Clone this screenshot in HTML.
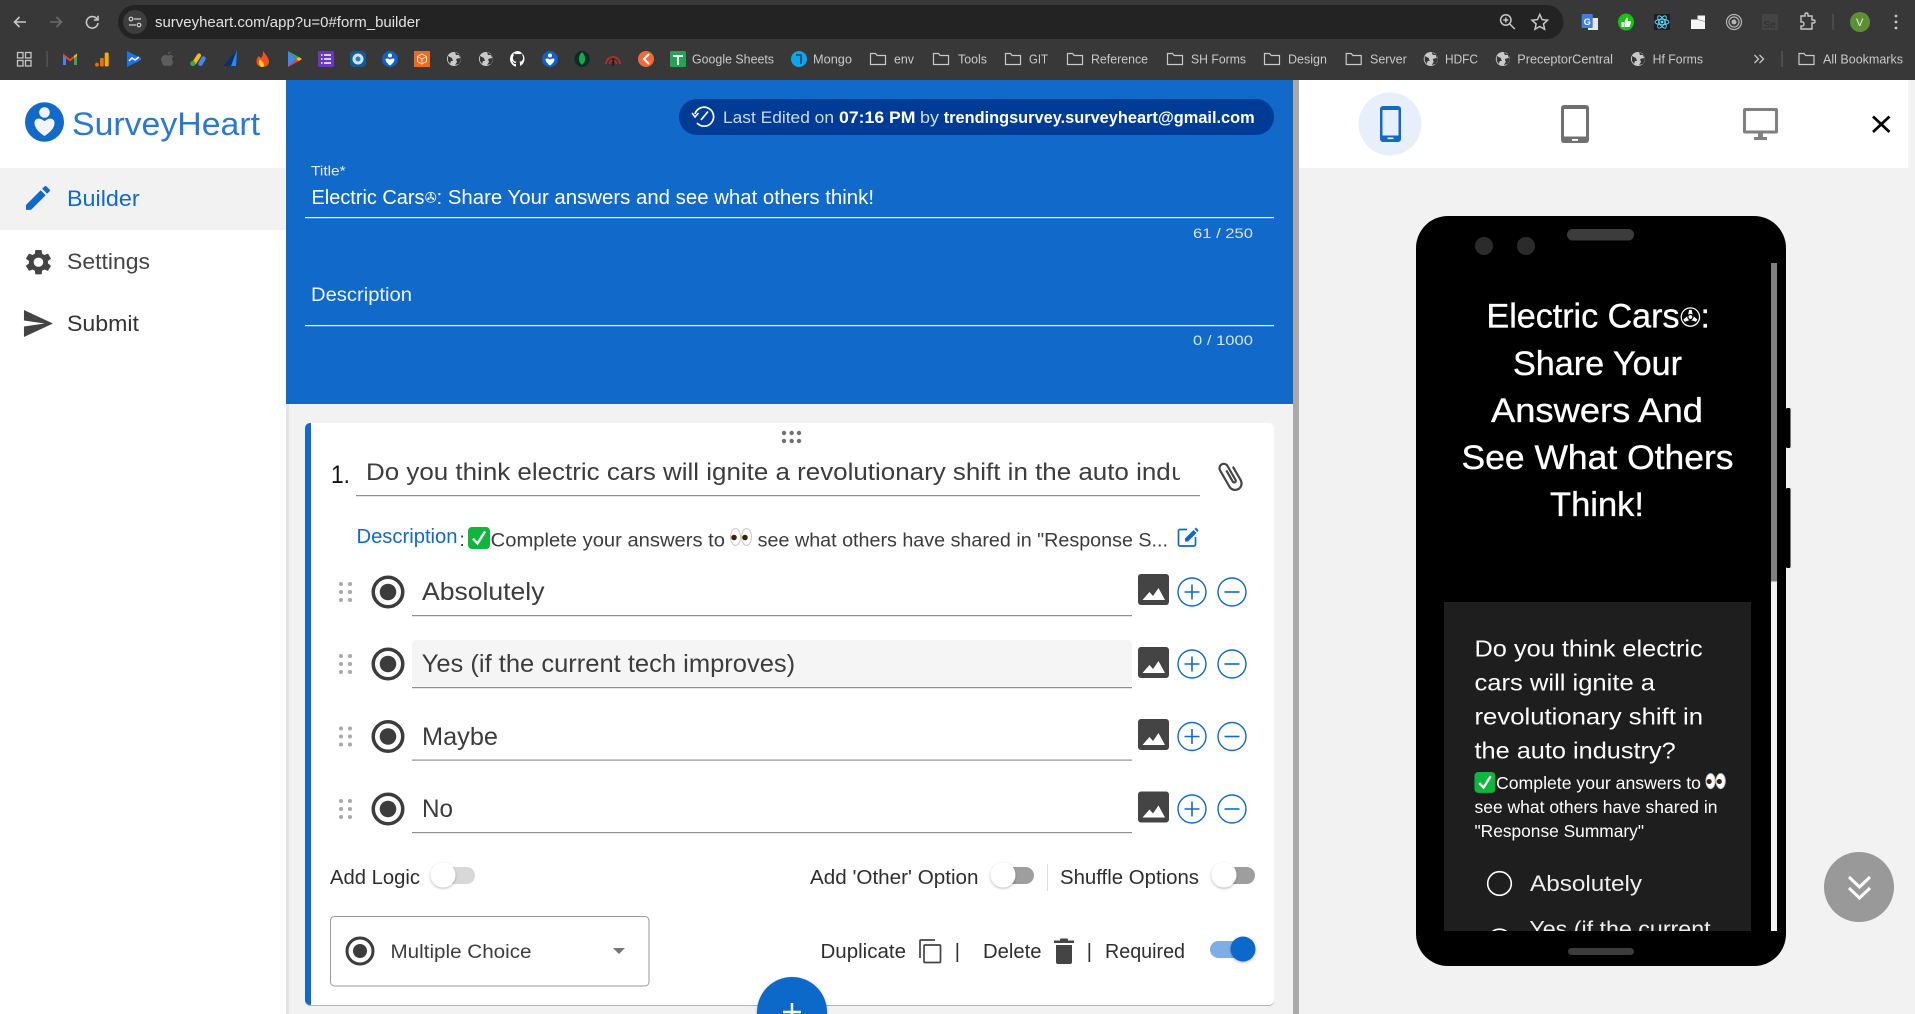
<!DOCTYPE html>
<html lang="en">
<head>
<meta charset="utf-8">
<title>SurveyHeart Form Builder</title>
<style>
html,body{margin:0;padding:0;width:1915px;height:1014px;overflow:hidden;background:#f2f2f2}
svg{display:block;position:absolute;left:0;top:0}
text{font-family:"Liberation Sans","DejaVu Sans",sans-serif;white-space:pre}
.bm{font-size:12.5px;fill:#c9c9c9}
.op{font-size:25px;fill:#3c3c3c}
.lb{font-size:20px;fill:#2e2e2e}
.ph{font-size:34px;fill:#fff;stroke:#fff;stroke-width:.35px}
.pq{font-size:23.5px;fill:#fff}
.pd{font-size:17.5px;fill:#fff}
</style>
</head>
<body>
<svg width="1915" height="1014" viewBox="0 0 1915 1014" xmlns="http://www.w3.org/2000/svg">
<defs>
  <clipPath id="qc"><rect x="360" y="450" width="820" height="45"/></clipPath>
  <clipPath id="pc"><rect x="1444" y="602" width="307" height="329"/></clipPath>
  <filter id="sh" x="-40%" y="-40%" width="180%" height="180%"><feDropShadow dx="0" dy="1" stdDeviation="1.200" flood-color="#000" flood-opacity=".3"/></filter>
  <g id="radio"><circle r="14.75" fill="#fff" stroke="#3c3c3c" stroke-width="3.5"/><circle r="8.3" fill="#3c3c3c"/></g>
  <g id="dots" fill="#a9a9a9"><circle cx="-4.5" cy="-8" r="2"/><circle cx="4.5" cy="-8" r="2"/><circle cx="-4.5" r="2"/><circle cx="4.5" r="2"/><circle cx="-4.5" cy="8" r="2"/><circle cx="4.5" cy="8" r="2"/></g>
  <g id="imgi"><rect width="31" height="31" rx="3" fill="#444"/><path d="M4.5 26L11.5 18L15 22L20.5 14L27 26Z" fill="#fff"/></g>
  <g id="plus"><circle r="14" fill="#fff" stroke="#1169c9" stroke-width="1.4"/><path d="M-7.5 0H7.5M0-7.5V7.5" stroke="#1169c9" stroke-width="1.6"/></g>
  <g id="minus"><circle r="14" fill="#fff" stroke="#1169c9" stroke-width="1.4"/><path d="M-7.5 0H7.5" stroke="#1169c9" stroke-width="1.6"/></g>
  <path id="folder" d="M-7.5 5.5V-5.5H-2.5L-.8-3.5H7.5V5.5Z" fill="none" stroke="#c9c9c9" stroke-width="1.2"/>
  <g id="globe"><circle r="7" fill="#c9c9c9"/><path d="M-6-3L-2-1-1 2-3 2-4 5-6 2ZM1-7L2-4 5-4 6-1 2 0 3 3 1 6 5 5 7 1 6-4Z" fill="#383838"/></g>
  <g id="check"><rect width="22" height="22" rx="4" fill="#10b53c"/><path d="M5 11.5L9.5 16.5L17 4.5" fill="none" stroke="#fff" stroke-width="2.4"/></g>
  <g id="eyes"><ellipse cx="5.5" cy="9" rx="5" ry="8.4" fill="#fff" stroke="#c8c8c8"/><ellipse cx="16.5" cy="9" rx="5" ry="8.4" fill="#fff" stroke="#c8c8c8"/><circle cx="4" cy="9.5" r="2.8" fill="#3a2207"/><circle cx="15" cy="9.5" r="2.8" fill="#3a2207"/></g>
</defs>

<!-- browser chrome -->
<rect width="1915" height="80" fill="#383838"/>
<rect x="118" y="5" width="1445.500" height="34" rx="17" fill="#232323"/>
<g fill="none" stroke-width="1.6">
  <path d="M26 22H14.5M19.5 17L14.5 22L19.5 27" stroke="#c7c7c7"/>
  <path d="M50 22H61M56.5 17L61.5 22L56.5 27" stroke="#6b6b6b"/>
  <path d="M97 19A5.8 5.8 0 1 0 98 23M98 15.8V20H93.8" stroke="#c7c7c7"/>
</g>
<circle cx="135" cy="22" r="12" fill="#3d3d3d"/>
<g fill="none" stroke="#d0d0d0" stroke-width="1.2"><path d="M134 19H141M129 25H136"/><circle cx="131" cy="19" r="1.8"/><circle cx="139" cy="25" r="1.8"/></g>
<text x="155" y="27" font-size="14.5" fill="#e3e3e3" textLength="265" lengthAdjust="spacingAndGlyphs">surveyheart.com/app?u=0#form_builder</text>
<g fill="none" stroke="#c7c7c7" stroke-width="1.5" transform="translate(-2.200 0)">
  <circle cx="1508" cy="20" r="5.2"/><path d="M1512 24L1517 29M1505.5 20H1510.5M1508 17.5V22.5"/>
  <path d="M1542 14.5L1544.3 19.6L1549.8 20.2L1545.7 23.9L1546.8 29.3L1542 26.5L1537.2 29.3L1538.3 23.9L1534.2 20.2L1539.7 19.6Z"/>
</g>
<!-- extensions -->
<rect x="1588" y="18" width="10" height="12" fill="#e6e6e6"/><rect x="1581.700" y="14" width="11" height="14" rx="1" fill="#3f7fe3"/>
<text x="1583.700" y="25" font-size="9" fill="#fff" font-weight="bold">G</text>
<g transform="translate(-2.500 0)"><ellipse cx="1628.5" cy="22" rx="8" ry="8.5" fill="#0fc80f"/><path d="M1624 22h2.5v5H1624ZM1627 27v-5l2-4.5c1.4 0 1.6 1 1.4 2.5l-.2 1h2.6c.6 0 .9.5.7 1l-1.2 4.5c-.1.4-.4.5-.8.5Z" fill="#fff"/></g>
<g transform="translate(-3 0)"><rect x="1657" y="14" width="16" height="16" fill="#1b2027"/>
<g fill="none" stroke="#61dafb" stroke-width=".9"><ellipse cx="1665" cy="22" rx="7" ry="2.8"/><ellipse cx="1665" cy="22" rx="7" ry="2.8" transform="rotate(60 1665 22)"/><ellipse cx="1665" cy="22" rx="7" ry="2.8" transform="rotate(120 1665 22)"/></g><circle cx="1665" cy="22" r="1.4" fill="#61dafb"/></g>
<path d="M1691 19.500H1697.500V15.500H1705V29H1691Z" fill="#f4f4f4"/><path d="M1697.500 19.500L1705 21.500" stroke="#999" stroke-width=".8"/>
<g transform="translate(-3.500 0)"><g fill="none" stroke="#b5b5b5" stroke-width="1.2"><circle cx="1737.5" cy="22" r="7.5"/><circle cx="1737.5" cy="22" r="5"/></g><circle cx="1737.5" cy="22" r="2.5" fill="#b5b5b5"/></g>
<rect x="1762" y="14" width="16" height="16" fill="#444"/><text x="1763.500" y="28" font-size="10" fill="#2e2e2e">Se</text>
<path transform="translate(-4 0)" d="M1805 16h4v-1.5c0-2 3-2 3 0V16h4v4h1.5c2 0 2 3 0 3H1816v6h-11v-3c2 .5 3-.5 3-2s-1-2.500-3-2Z" fill="none" stroke="#c7c7c7" stroke-width="1.4"/>
<rect x="1832.500" y="14" width="1" height="16" fill="#5a5a5a"/>
<circle cx="1860" cy="22" r="10" fill="#5f8f35"/><text x="1856" y="26" font-size="11" fill="#e8f0e0">V</text>
<g fill="#c7c7c7"><circle cx="1896" cy="16" r="1.4"/><circle cx="1896" cy="22" r="1.4"/><circle cx="1896" cy="28" r="1.4"/></g>

<!-- bookmarks -->
<g fill="none" stroke="#c7c7c7" stroke-width="1.3"><rect x="17.500" y="52.500" width="5.500" height="5.500"/><rect x="25.500" y="52.500" width="5.500" height="5.500"/><rect x="17.500" y="60.500" width="5.500" height="5.500"/><rect x="25.500" y="60.500" width="5.500" height="5.500"/></g>
<rect x="46.500" y="51" width="1.200" height="16" fill="#5a5a5a"/>
<g transform="translate(70 59)"><path d="M-7-5.500V6H-4V-1Z" fill="#4285f4"/><path d="M7-5.500V6H4V-1Z" fill="#34a853"/><path d="M-7-5.500L0 0 7-5.500 7-3 0 2.500-7-3Z" fill="#ea4335"/><path d="M4-3.200L7-5.500V-3L4-.8Z" fill="#fbbc04"/></g>
<rect x="104.700" y="52.500" width="4" height="14" rx="1.500" fill="#f9ab00"/><rect x="100" y="58" width="3.800" height="8.500" rx="1" fill="#e37400"/><circle cx="97" cy="64.700" r="1.900" fill="#e37400"/>
<g transform="translate(134 59)"><path d="M-7-8L7-1 7 1-7 8Z" fill="#1a73e8"/><path d="M-5 2L-2-1 1 1 5-2" fill="none" stroke="#fff" stroke-width="1.500"/></g>
<path d="M161 60c0-3 2-5 4.500-5 1 0 1.500.5 2.500.5s1.500-.5 2.500-.5c1.500 0 2.500.8 3 1.500-2 1.500-2 4 0 5.500-.5 1.500-2 4-3.500 4-1 0-1.500-.5-2.500-.5s-1.500.5-2.500.5c-2 0-3.500-3.500-3.500-6ZM168 54c0-1.500 1-2.500 2.500-2.500 0 1.500-1 2.500-2.500 2.500Z" fill="#5d5d5d"/>
<g stroke-linecap="round"><path d="M199 55.500L194.500 62.500" stroke="#fbbc04" stroke-width="4.200"/><path d="M203.500 58.500L200.500 63.800" stroke="#4285f4" stroke-width="4.500"/><circle cx="192.800" cy="63.500" r="2.600" fill="#34a853" stroke="none"/></g>
<g transform="translate(231 59)"><path d="M6-9L-8 7H0Z" fill="#0b2f6b"/><path d="M6-9L0 7H5Z" fill="#1a8cff"/></g>
<g transform="translate(262 59)"><path d="M1-8C4-4 7-1 7 3 7 6 4 8 1 8-3 8-5.500 6-5.500 2.500-5.500 0-4-2-3-3-2-1-1-1 0-2 1-4 1-6 1-8Z" fill="#f4511e"/><path d="M-3 3C-3 0-1 0-.5 1.500 0 3 2 4 2 6 2 7.500 1 8 0 8-2 8-3 5-3 3Z" fill="#ffca28"/></g>
<g transform="translate(294 59)"><path d="M-6-8L2 0-6 8Z" fill="#4285f4"/><path d="M-6-8L5-2 2 0Z" fill="#34a853"/><path d="M-6 8L5 2 2 0Z" fill="#ea4335"/><path d="M5-2L8 0 5 2 2 0Z" fill="#fbbc04"/></g>
<rect x="318" y="51" width="16" height="16" rx="1.500" fill="#673ab7"/><path d="M321 55h1.500M324 55h7M321 59h1.500M324 59h7M321 63h1.500M324 63h7" stroke="#fff" stroke-width="1.600"/>
<rect x="350" y="51" width="16" height="16" rx="4" fill="#0c5f95"/><circle cx="358" cy="59" r="5.500" fill="#cfe2ee"/><circle cx="358" cy="59" r="2.500" fill="#2f7fae"/>
<ellipse cx="390" cy="59" rx="8" ry="8" fill="#1261c4"/><circle cx="390" cy="55.500" r="2" fill="#fff"/><path d="M385.500 59c1.500-1 3-.5 4.500.5 1.500-1 3-1.500 4.500-.5 0 3-3 5.500-4.500 6.500-1.500-1-4.500-3.500-4.500-6.500Z" fill="#fff"/>
<rect x="414" y="51" width="16" height="16" fill="#ee6a1f"/><path d="M422 54l4.500 2.500v5L422 64l-4.500-2.500v-5ZM417.500 56.500L422 59l4.500-2.500M422 59v5" fill="none" stroke="#fde3d0" stroke-width="1"/>
<use href="#globe" x="454" y="59"/><use href="#globe" x="486" y="59"/>
<path d="M518 51a8 8 0 0 0-2.500 15.600c.4 0 .5-.2.500-.4v-2.200c-2.200.5-2.700-1-2.700-1-.4-.9-.9-1.200-.9-1.200-.7-.5.100-.5.100-.5.800.1 1.200.8 1.200.8.700 1.200 1.900.900 2.300.7.100-.5.300-.9.500-1.100-1.800-.2-3.600-.9-3.600-4 0-.9.300-1.600.8-2.100-.1-.2-.4-1 .1-2.100 0 0 .7-.2 2.200.8a7.500 7.500 0 0 1 4 0c1.500-1 2.200-.8 2.200-.8.500 1.100.2 1.900.1 2.100.5.500.8 1.200.8 2.100 0 3.100-1.900 3.800-3.700 4 .3.200.6.700.6 1.500v2.200c0 .2.100.5.500.4A8 8 0 0 0 518 51Z" fill="#fff"/>
<circle cx="550" cy="59" r="8" fill="#1261c4"/><circle cx="550" cy="55.500" r="2" fill="#fff"/><path d="M545.500 59c1.500-1 3-.5 4.500.5 1.500-1 3-1.500 4.500-.5 0 3-3 5.500-4.500 6.500-1.500-1-4.500-3.500-4.500-6.500Z" fill="#fff"/>
<ellipse cx="582" cy="59" rx="7.500" ry="8" fill="#0a2a24"/><path d="M582 52c2 2 3 4 3 7s-1.500 4.500-3 6c-1.500-1.500-3-3-3-6s1-5 3-7Z" fill="#10aa50"/>
<path d="M606 64a7 7 0 0 1 14 0" fill="none" stroke="#b52a2a" stroke-width="2"/><path d="M609.500 64a3.500 3.500 0 0 1 7 0" fill="none" stroke="#b52a2a" stroke-width="1.500"/><rect x="612.500" y="58" width="1.500" height="8" fill="#1a1a1a"/>
<circle cx="646" cy="59" r="8" fill="#ef6c3a"/><path d="M649 54L644 59 649 64" fill="none" stroke="#fff" stroke-width="2"/>
<rect x="670" y="51" width="16" height="16" rx="1.500" fill="#23a455"/><path d="M673 56H683M678 56V65" stroke="#fff" stroke-width="2"/>
<text x="692" y="63.300" class="bm" textLength="82" lengthAdjust="spacingAndGlyphs">Google Sheets</text>
<circle cx="799" cy="59" r="8" fill="#0ea5e9"/><path d="M796 55h5v9" fill="none" stroke="#123" stroke-width="1.200"/>
<text x="813" y="63.300" class="bm" textLength="39" lengthAdjust="spacingAndGlyphs">Mongo</text>
<use href="#folder" x="878" y="59"/><text x="894" y="63.300" class="bm" textLength="20" lengthAdjust="spacingAndGlyphs">env</text>
<use href="#folder" x="941" y="59"/><text x="958" y="63.300" class="bm" textLength="29" lengthAdjust="spacingAndGlyphs">Tools</text>
<use href="#folder" x="1013" y="59"/><text x="1029" y="63.300" class="bm" textLength="19" lengthAdjust="spacingAndGlyphs">GIT</text>
<use href="#folder" x="1075" y="59"/><text x="1091" y="63.300" class="bm" textLength="57" lengthAdjust="spacingAndGlyphs">Reference</text>
<use href="#folder" x="1175" y="59"/><text x="1191" y="63.300" class="bm" textLength="55" lengthAdjust="spacingAndGlyphs">SH Forms</text>
<use href="#folder" x="1272" y="59"/><text x="1288" y="63.300" class="bm" textLength="39" lengthAdjust="spacingAndGlyphs">Design</text>
<use href="#folder" x="1353.700" y="59"/><text x="1370" y="63.300" class="bm" textLength="36.800" lengthAdjust="spacingAndGlyphs">Server</text>
<use href="#globe" x="1430.700" y="59"/><text x="1445" y="63.300" class="bm" textLength="33" lengthAdjust="spacingAndGlyphs">HDFC</text>
<use href="#globe" x="1502.800" y="59"/><text x="1517.300" y="63.300" class="bm" textLength="95.700" lengthAdjust="spacingAndGlyphs">PreceptorCentral</text>
<use href="#globe" x="1638" y="59"/><text x="1652.600" y="63.300" class="bm" textLength="50.400" lengthAdjust="spacingAndGlyphs">Hf Forms</text>
<path d="M1754.500 55L1758.500 59L1754.500 63M1759.500 55L1763.500 59L1759.500 63" fill="none" stroke="#c7c7c7" stroke-width="1.300"/>
<rect x="1781.500" y="51" width="1.200" height="16" fill="#5a5a5a"/>
<use href="#folder" x="1806.500" y="59"/><text x="1823" y="63.300" class="bm" textLength="80" lengthAdjust="spacingAndGlyphs">All Bookmarks</text>

<!-- sidebar -->
<rect x="0" y="80" width="286" height="934" fill="#fff"/>
<rect x="0" y="168" width="286" height="62" fill="#f2f2f2"/>
<ellipse cx="44.500" cy="122" rx="19.500" ry="19.700" fill="#1169c9"/>
<circle cx="44.500" cy="112.500" r="5.300" fill="#f1f5fb"/>
<path d="M44.500 136C39 132.500 34.500 128 34.500 123C34.500 119 38 118 41 119C43 120 44 121 44.500 121C45 121 46 120 48 119C51 118 54.500 119 54.500 123C54.500 128 50 132.500 44.500 136Z" fill="#f1f5fb"/>
<text x="72" y="135" font-size="32" fill="#2a79d0" textLength="188" lengthAdjust="spacingAndGlyphs">SurveyHeart</text>
<path transform="translate(22 182) scale(1.330)" d="M3 17.250V21h3.750L17.810 9.940l-3.750-3.750L3 17.250zM20.710 7.040c.39-.39.39-1.020 0-1.410l-2.340-2.340c-.39-.39-1.020-.39-1.410 0l-1.830 1.830 3.750 3.750 1.830-1.830z" fill="#1169c9"/>
<text x="67" y="206.200" font-size="22" fill="#1169c9" textLength="72.600" lengthAdjust="spacingAndGlyphs">Builder</text>
<path transform="translate(22.500 247) scale(1.330 1.270)" d="M19.140 12.940c.04-.3.06-.61.06-.94 0-.32-.02-.64-.07-.94l2.030-1.580c.18-.14.23-.41.12-.61l-1.920-3.320c-.12-.22-.37-.29-.59-.22l-2.390.96c-.5-.38-1.030-.7-1.620-.94l-.36-2.540c-.04-.24-.24-.41-.48-.41h-3.840c-.24 0-.43.17-.47.41l-.36 2.540c-.59.24-1.130.57-1.620.94l-2.390-.96c-.22-.08-.47 0-.59.22L2.740 8.870c-.12.21-.08.47.12.61l2.030 1.580c-.05.3-.09.63-.09.94s.02.64.07.94l-2.030 1.580c-.18.14-.23.41-.12.61l1.920 3.320c.12.22.37.29.59.22l2.390-.96c.5.38 1.030.7 1.620.94l.36 2.540c.05.24.24.41.48.41h3.840c.24 0 .44-.17.47-.41l.36-2.540c.59-.24 1.130-.56 1.620-.94l2.390.96c.22.08.47 0 .59-.22l1.920-3.320c.12-.22.07-.47-.12-.61l-2.010-1.580zM12 15.600c-1.980 0-3.600-1.620-3.600-3.600s1.620-3.600 3.600-3.600 3.600 1.620 3.600 3.600-1.620 3.600-3.600 3.600z" fill="#444"/>
<text x="67" y="269" font-size="22" fill="#444" textLength="83" lengthAdjust="spacingAndGlyphs">Settings</text>
<path transform="translate(21.200 305.500) scale(1.380 1.500)" d="M2.010 21L23 12 2.010 3 2 10l15 2-15 2z" fill="#444"/>
<text x="67" y="331.200" font-size="22" fill="#333" textLength="72" lengthAdjust="spacingAndGlyphs">Submit</text>

<!-- main header -->
<rect x="286" y="404" width="7" height="610" fill="#e4e4e4"/>
<rect x="289" y="404" width="1005" height="610" fill="#f2f2f2"/>
<rect x="286" y="80" width="1007" height="324" fill="#1169c9"/>
<rect x="1293" y="80" width="6" height="934" fill="#a9a9a9"/>
<rect x="679" y="99" width="595" height="36" rx="18" fill="#003c95"/>
<g fill="none" stroke="#fff" stroke-width="1.700"><path d="M695 114A9.500 9.500 0 1 1 697 123"/><path d="M701 120L708 111.500"/><path d="M692 113L695 117 698.500 113" stroke-width="1.500"/></g>
<text x="723" y="123" font-size="17" fill="#ced9ec" textLength="111" lengthAdjust="spacingAndGlyphs">Last Edited on</text>
<text x="839" y="123" font-size="17" fill="#fff" font-weight="bold" textLength="76.500" lengthAdjust="spacingAndGlyphs">07:16 PM</text>
<text x="920" y="123" font-size="17" fill="#ced9ec" textLength="19" lengthAdjust="spacingAndGlyphs">by</text>
<text x="943.700" y="123" font-size="17" fill="#fff" font-weight="bold" textLength="311" lengthAdjust="spacingAndGlyphs">trendingsurvey.surveyheart@gmail.com</text>
<text x="311" y="175.500" font-size="14" fill="#e6effa" textLength="34.700" lengthAdjust="spacingAndGlyphs">Title*</text>
<text x="311.500" y="204" font-size="20" fill="#fff" textLength="113" lengthAdjust="spacingAndGlyphs">Electric Cars</text>
<text x="424.700" y="202.500" font-size="14.300" fill="#fff" style="font-family:'DejaVu Sans',sans-serif">✇</text>
<text x="436.500" y="204" font-size="20" fill="#fff" textLength="437.500" lengthAdjust="spacingAndGlyphs">: Share Your answers and see what others think!</text>
<rect x="305" y="217" width="969" height="1.200" fill="#fff"/>
<text x="1193" y="238" font-size="14" fill="#d7e4f6" textLength="60" lengthAdjust="spacingAndGlyphs">61 / 250</text>
<text x="311" y="301" font-size="19" fill="#eef4fc" textLength="101" lengthAdjust="spacingAndGlyphs">Description</text>
<rect x="305" y="325" width="969" height="1.200" fill="#fff"/>
<text x="1193" y="345" font-size="14" fill="#d7e4f6" textLength="60" lengthAdjust="spacingAndGlyphs">0 / 1000</text>

<!-- question card -->
<rect x="305" y="424" width="969" height="582" rx="5" fill="#b4b4b4"/>
<rect x="305" y="423" width="969" height="582" rx="5" fill="#fff"/>
<path d="M311 423H310A5 5 0 0 0 305 428V1000A5 5 0 0 0 310 1005H311Z" fill="#1169c9"/>
<g fill="#707070"><circle cx="784" cy="433" r="2.200"/><circle cx="791.700" cy="433" r="2.200"/><circle cx="799" cy="433" r="2.200"/><circle cx="784" cy="441" r="2.200"/><circle cx="791.700" cy="441" r="2.200"/><circle cx="799" cy="441" r="2.200"/></g>
<text x="331" y="483" font-size="25" fill="#111" textLength="19" lengthAdjust="spacingAndGlyphs">1.</text>
<g clip-path="url(#qc)">
  <text x="366" y="480" font-size="24" fill="#3c3c3c" textLength="804.700" lengthAdjust="spacingAndGlyphs">Do you think electric cars will ignite a revolutionary shift in the auto ind</text>
  <text x="1171.500" y="480" font-size="24" fill="#3c3c3c">ustry?</text>
</g>
<rect x="356" y="495" width="844" height="1.200" fill="#8f8f8f"/>
<path transform="translate(1230.500 475.500) rotate(-30) scale(1.080)" d="M6-6V8.500A6 6 0 0 1-6 8.500V-9A4 4 0 0 1 2-9V6A1.500 1.500 0 0 1-1 6V-6" fill="none" stroke="#444" stroke-width="2"/>
<text x="356.500" y="543" font-size="20" fill="#1169c9" textLength="101" lengthAdjust="spacingAndGlyphs">Description</text>
<text x="459.500" y="546" font-size="19" fill="#3c3c3c">:</text>
<use href="#check" x="468" y="527"/>
<text x="490.700" y="546.500" font-size="19.500" fill="#3c3c3c" textLength="234.300" lengthAdjust="spacingAndGlyphs">Complete your answers to</text>
<use href="#eyes" x="730" y="528"/>
<text x="757.700" y="546.500" font-size="19.500" fill="#3c3c3c" textLength="410.300" lengthAdjust="spacingAndGlyphs">see what others have shared in &quot;Response S...</text>
<path d="M1187 529.500H1180A1.500 1.500 0 0 0 1178.500 531V544.500A1.500 1.500 0 0 0 1180 546H1194A1.500 1.500 0 0 0 1195.500 544.500V537" fill="none" stroke="#1169c9" stroke-width="1.700"/>
<path d="M1185 541.500V538.500L1193.500 530L1196.500 533L1188 541.500ZM1194.500 529L1196 527.500L1198.500 530L1197.500 532Z" fill="#1169c9"/>

<!-- options -->
<rect x="412" y="640" width="720" height="47" rx="4" fill="#f5f5f5"/>
<use href="#dots" x="345.500" y="592"/><use href="#radio" x="388" y="592"/>
<text x="422" y="600" class="op" textLength="122.500" lengthAdjust="spacingAndGlyphs">Absolutely</text>
<rect x="412" y="615" width="720" height="1.200" fill="#8f8f8f"/>
<use href="#imgi" x="1138" y="574"/><use href="#plus" x="1192" y="592"/><use href="#minus" x="1232" y="592"/>

<use href="#dots" x="345.500" y="664"/><use href="#radio" x="388" y="664"/>
<text x="421.700" y="672" class="op" textLength="373.500" lengthAdjust="spacingAndGlyphs">Yes (if the current tech improves)</text>
<rect x="412" y="687" width="720" height="1.200" fill="#8f8f8f"/>
<use href="#imgi" x="1138" y="647"/><use href="#plus" x="1192" y="664"/><use href="#minus" x="1232" y="664"/>

<use href="#dots" x="345.500" y="736.500"/><use href="#radio" x="388" y="736.500"/>
<text x="422" y="745" class="op" textLength="76" lengthAdjust="spacingAndGlyphs">Maybe</text>
<rect x="412" y="759.500" width="720" height="1.200" fill="#8f8f8f"/>
<use href="#imgi" x="1138" y="719"/><use href="#plus" x="1192" y="736.500"/><use href="#minus" x="1232" y="736.500"/>

<use href="#dots" x="345.500" y="809"/><use href="#radio" x="388" y="809"/>
<text x="422" y="817" class="op" textLength="31" lengthAdjust="spacingAndGlyphs">No</text>
<rect x="412" y="832" width="720" height="1.200" fill="#8f8f8f"/>
<use href="#imgi" x="1138" y="791.500"/><use href="#plus" x="1192" y="809"/><use href="#minus" x="1232" y="809"/>

<!-- toggles row -->
<text x="330" y="884" class="lb" textLength="90" lengthAdjust="spacingAndGlyphs">Add Logic</text>
<rect x="435" y="867" width="40" height="17" rx="8.500" fill="#d8d8d8"/>
<circle cx="443" cy="875" r="12.500" fill="#fff" filter="url(#sh)"/>
<text x="810" y="884" class="lb" textLength="168.500" lengthAdjust="spacingAndGlyphs">Add 'Other' Option</text>
<rect x="995" y="867" width="39" height="17" rx="8.500" fill="#9e9e9e"/>
<circle cx="1003" cy="875" r="12.500" fill="#fff" filter="url(#sh)"/>
<rect x="1047" y="864" width="1" height="27" fill="#ddd"/>
<text x="1060" y="884" class="lb" textLength="139" lengthAdjust="spacingAndGlyphs">Shuffle Options</text>
<rect x="1216" y="867" width="39" height="17" rx="8.500" fill="#9e9e9e"/>
<circle cx="1224" cy="875" r="12.500" fill="#fff" filter="url(#sh)"/>

<!-- bottom row -->
<rect x="330.500" y="916.500" width="318.500" height="69.500" rx="4" fill="#fff" stroke="#999"/>
<circle cx="360" cy="951" r="13" fill="#fff" stroke="#3c3c3c" stroke-width="3"/><circle cx="360" cy="951" r="7" fill="#3c3c3c"/>
<text x="390.500" y="958" font-size="19.500" fill="#3c3c3c" textLength="141" lengthAdjust="spacingAndGlyphs">Multiple Choice</text>
<path d="M613 948H625L619 954Z" fill="#757575"/>
<text x="820.500" y="958" class="lb" textLength="85.500" lengthAdjust="spacingAndGlyphs">Duplicate</text>
<path d="M935 940H921A1 1 0 0 0 920 941V958" fill="none" stroke="#444" stroke-width="1.700"/>
<rect x="924" y="945" width="16.500" height="17.500" rx="1" fill="none" stroke="#444" stroke-width="1.700"/>
<rect x="956.500" y="943" width="1.700" height="19" fill="#333"/>
<text x="983" y="958" class="lb" textLength="58.500" lengthAdjust="spacingAndGlyphs">Delete</text>
<path d="M1060 940.500V939.500A1 1 0 0 1 1061 938.500H1067A1 1 0 0 1 1068 939.500V940.500H1074V943H1054V940.500ZM1056 945H1072V962A2 2 0 0 1 1070 964H1058A2 2 0 0 1 1056 962Z" fill="#444"/>
<rect x="1088.500" y="943" width="1.700" height="19" fill="#333"/>
<text x="1105" y="958" class="lb" textLength="80" lengthAdjust="spacingAndGlyphs">Required</text>
<rect x="1210" y="941" width="40" height="17" rx="8.500" fill="#7fade4"/>
<circle cx="1243" cy="949" r="12.500" fill="#1169c9" filter="url(#sh)"/>

<!-- add FAB -->
<circle cx="792" cy="1012" r="35" fill="#1169c9" filter="url(#sh)"/>
<path d="M783 1012H801M792 1003V1021" stroke="#fff" stroke-width="2.500"/>

<!-- preview panel -->
<rect x="1299" y="80" width="616" height="934" fill="#f2f2f2"/>
<rect x="1299" y="80" width="609" height="88" fill="#fff"/>
<circle cx="1390" cy="124" r="31.500" fill="#e7effa"/>
<rect x="1380" y="106" width="21" height="36" rx="3" fill="#1169c9"/><rect x="1382.500" y="110" width="16" height="25.500" fill="#e7effa"/><rect x="1387.500" y="137.500" width="6" height="1.600" fill="#e7effa"/>
<rect x="1561" y="105" width="28" height="38" rx="3" fill="#707070"/><rect x="1564" y="109" width="22" height="27.500" fill="#fff"/><rect x="1572" y="139" width="6" height="1.800" fill="#fff"/>
<rect x="1743" y="108" width="35" height="25.500" rx="2" fill="#808080"/><rect x="1746" y="111" width="29" height="19.500" fill="#fff"/><rect x="1758" y="133" width="5" height="4" fill="#808080"/><rect x="1754" y="137" width="13" height="3" fill="#808080"/>
<path d="M1873 116.500L1889.500 132M1889.500 116.500L1873 132" stroke="#000" stroke-width="2.700"/>

<!-- phone -->
<rect x="1786" y="408" width="4.500" height="40" rx="1.500" fill="#000"/>
<rect x="1786" y="488" width="4.500" height="80" rx="1.500" fill="#000"/>
<rect x="1416" y="216" width="370" height="750" rx="32" fill="#000"/>
<rect x="1567" y="229" width="67" height="11.500" rx="5.700" fill="#3c3c3c"/>
<ellipse cx="1484" cy="246" rx="9" ry="9" fill="#2b2b2b"/><ellipse cx="1526" cy="246" rx="9" ry="9" fill="#2b2b2b"/>
<rect x="1568" y="948" width="66" height="7" rx="3.500" fill="#3c3c3c"/>
<rect x="1771" y="263" width="6" height="668" fill="#f1f1f1"/>
<rect x="1771" y="263" width="6" height="318.500" fill="#808080"/>

<text x="1486.500" y="327.500" class="ph" textLength="193" lengthAdjust="spacingAndGlyphs">Electric Cars</text>
<text x="1679.500" y="326.500" font-size="26" fill="#fff" style="font-family:'DejaVu Sans',sans-serif">✇</text>
<text x="1700.500" y="327.500" class="ph">:</text>
<text x="1513" y="375" class="ph" textLength="169" lengthAdjust="spacingAndGlyphs">Share Your</text>
<text x="1491" y="422" class="ph" textLength="212" lengthAdjust="spacingAndGlyphs">Answers And</text>
<text x="1461.500" y="469" class="ph" textLength="272" lengthAdjust="spacingAndGlyphs">See What Others</text>
<text x="1550" y="516" class="ph" textLength="94" lengthAdjust="spacingAndGlyphs">Think!</text>

<rect x="1444" y="602" width="307" height="329" fill="#1e1e1e"/>
<text x="1474.500" y="656.400" class="pq" textLength="228.200" lengthAdjust="spacingAndGlyphs">Do you think electric</text>
<text x="1474.500" y="690.500" class="pq" textLength="180.500" lengthAdjust="spacingAndGlyphs">cars will ignite a</text>
<text x="1474.500" y="724.600" class="pq" textLength="228.500" lengthAdjust="spacingAndGlyphs">revolutionary shift in</text>
<text x="1474.500" y="758.700" class="pq" textLength="201.200" lengthAdjust="spacingAndGlyphs">the auto industry?</text>
<use href="#check" transform="translate(1474.500 772) scale(.95)"/>
<text x="1496" y="789" class="pd" textLength="205" lengthAdjust="spacingAndGlyphs">Complete your answers to</text>
<use href="#eyes" transform="translate(1705.500 773) scale(.92 .9)"/>
<text x="1474.500" y="813" class="pd" textLength="243" lengthAdjust="spacingAndGlyphs">see what others have shared in</text>
<text x="1474.500" y="837" class="pd" textLength="169.500" lengthAdjust="spacingAndGlyphs">&quot;Response Summary&quot;</text>
<circle cx="1499.500" cy="883.500" r="11.800" fill="none" stroke="#fff" stroke-width="1.600"/>
<text x="1530" y="891" font-size="22.500" fill="#eee" textLength="112" lengthAdjust="spacingAndGlyphs">Absolutely</text>
<g clip-path="url(#pc)">
  <circle cx="1499.500" cy="941" r="11.800" fill="none" stroke="#fff" stroke-width="1.600"/>
  <text x="1529.400" y="936.400" font-size="22.500" fill="#eee" textLength="181.200" lengthAdjust="spacingAndGlyphs">Yes (if the current</text>
</g>

<!-- scroll FAB -->
<ellipse cx="1859" cy="887" rx="35" ry="35" fill="#999"/>
<path d="M1849 877L1859.500 887L1870 877M1849 888L1859.500 898L1870 888" fill="none" stroke="#fff" stroke-width="3"/>
</svg>
</body>
</html>
